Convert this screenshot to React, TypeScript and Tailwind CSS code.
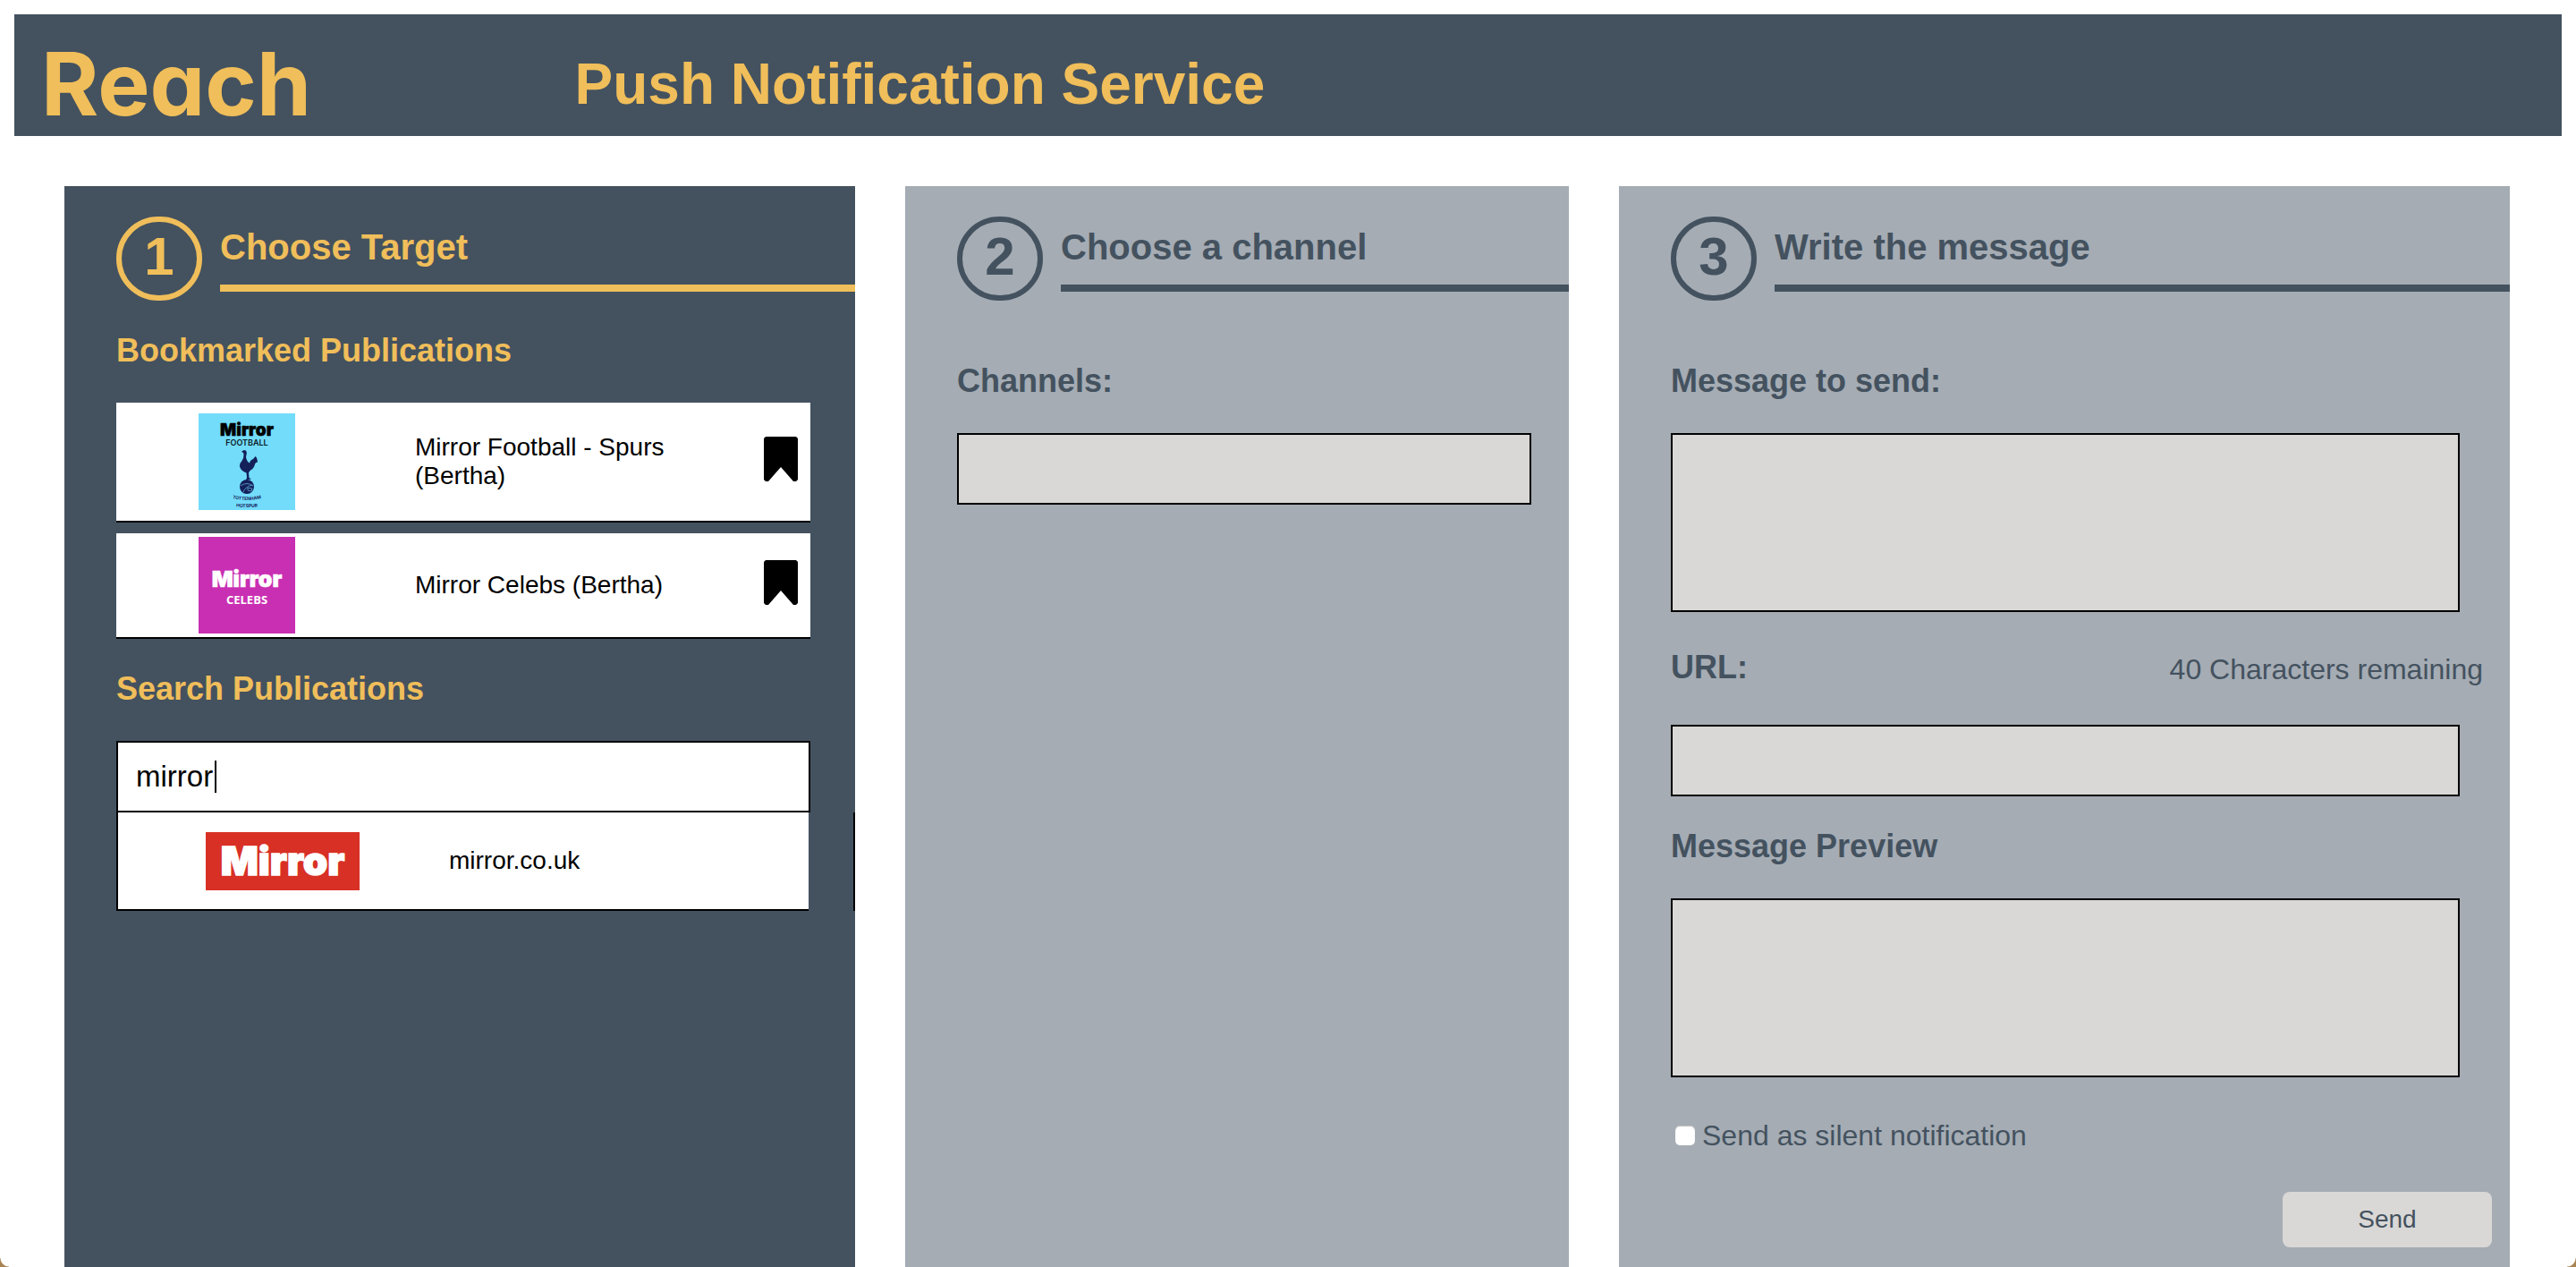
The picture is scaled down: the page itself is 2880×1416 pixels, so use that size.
import { useState } from "react";
import type { ReactNode } from "react";

type Tone = "gold" | "slate";

function ReachLogo() {
  return (
    <span className="font-[Inter,sans-serif] text-[98px] leading-[104px] font-bold [font-feature-settings:'cv11']">
      Reach
    </span>
  );
}

function SpursTile() {
  return (
    <svg viewBox="0 0 108 108" className="size-[108px]" role="img" aria-label="Mirror Football Spurs logo">
      <defs>
        <path id="arc-upper" d="M34 94 Q54 100 74 94" />
        <path id="arc-lower" d="M34 103 Q54 107 74 103" />
      </defs>
      <rect width="108" height="108" fill="#73dcfb" />
      <text x="54" y="25" textAnchor="middle" fontFamily="Inter, sans-serif" fontWeight="900" fontSize="19" fill="#000" stroke="#000" strokeWidth="0.5">
        Mirror
      </text>
      <text x="54" y="36" textAnchor="middle" fontFamily="Inter, sans-serif" fontWeight="600" fontSize="9" fill="#0a1a22">
        FOOTBALL
      </text>
      <path
        d="M48 42.500L51 41q2.800 0 2.800 3.500L53 49q1 5 4 6.500q1-3.500 4.500-5l2-2.500q2 1 2.500 6.500q-2.500 0-3.200 3q-1 4-5.300 6.500l-1.500 2.500l.5 5.500l2.500 1.500l-3.500.5l-1.500 2h-1.500l1.500-4.500l-.5-5q-6-2-7.500-7q-.4-3.500 2.500-6.500q2.500-3 1.800-8.500z"
        fill="#14205a"
      />
      <circle cx="54" cy="82" r="8" fill="#14205a" />
      <path d="M47 81q7-5 14 0M50 88q2-6 10-8M55 83l5 1-1 3-4-1z" fill="none" stroke="#5fa8cf" strokeWidth="0.8" />
      <text fontFamily="Inter, sans-serif" fontWeight="700" fontSize="5" fill="#14205a">
        <textPath href="#arc-upper" startOffset="50%" textAnchor="middle">TOTTENHAM</textPath>
      </text>
      <text fontFamily="Inter, sans-serif" fontWeight="700" fontSize="5" fill="#14205a">
        <textPath href="#arc-lower" startOffset="50%" textAnchor="middle">HOTSPUR</textPath>
      </text>
    </svg>
  );
}

function CelebsTile() {
  return (
    <svg viewBox="0 0 108 108" className="size-[108px]" role="img" aria-label="Mirror Celebs logo">
      <rect width="108" height="108" fill="#c92fb2" />
      <text x="54" y="56" textAnchor="middle" fontFamily="Inter, sans-serif" fontWeight="900" fontSize="25" fill="#fff" stroke="#fff" strokeWidth="0.6">
        Mirror
      </text>
      <text x="54" y="75" textAnchor="middle" fontFamily="Open Sans, sans-serif" fontWeight="700" fontSize="13" fill="#fff">
        CELEBS
      </text>
    </svg>
  );
}

function MirrorTile() {
  return (
    <svg viewBox="0 0 172 65" className="h-[65px] w-[172px]" role="img" aria-label="Mirror logo">
      <rect width="172" height="65" fill="#d83025" />
      <text x="86" y="48" textAnchor="middle" fontFamily="Inter, sans-serif" fontWeight="900" fontSize="44" fill="#fff" stroke="#fff" strokeWidth="1.5">
        Mirror
      </text>
    </svg>
  );
}

function Step({ number, title, tone }: { number: number; title: string; tone: Tone }) {
  const ring = tone === "gold" ? "border-[#f0be5a]" : "border-[#44525f]";
  return (
    <div className="flex gap-5">
      <div className={`flex h-[94px] w-24 shrink-0 items-center justify-center rounded-full border-[6px] pb-1 text-[60px] leading-[68px] font-bold ${ring}`}>
        {number}
      </div>
      <h2 className={`mt-3 h-[72px] grow border-b-8 text-[40px] leading-[44px] font-bold ${ring}`}>{title}</h2>
    </div>
  );
}

function Panel({ tone, children }: { tone: Tone; children: ReactNode }) {
  const look = tone === "gold" ? "bg-[#44525f] text-[#f0be5a]" : "bg-[#a5acb4] text-[#44525f]";
  return <section className={`min-w-0 overflow-hidden pt-[34px] pl-[58px] ${look}`}>{children}</section>;
}

function Bookmark({ name, logo }: { name: string; logo: ReactNode }) {
  return (
    <li className="flex items-center border-b-2 border-black bg-white py-1 text-black">
      <div className="flex w-[292px] shrink-0 justify-center">{logo}</div>
      <p className="my-[30px] ml-[42px] w-[292px] text-[28px] leading-8">{name}</p>
      <button type="button" aria-label={`Remove bookmark ${name}`} className="mr-[14px] mb-[6px] ml-auto">
        <svg viewBox="0 0 38 50" className="h-[50px] w-[38px]" aria-hidden="true">
          <path d="M2 0h34l2 2v46l-2 2h-3L19 34 5 50H2l-2-2V2z" />
        </svg>
      </button>
    </li>
  );
}

const field = "block w-full resize-none border-2 border-black bg-[#d9d8d6] px-5 text-[33px] outline-none";
const label = "block text-[36px] leading-10 font-bold";

export default function App() {
  const [query, setQuery] = useState("mirror");
  return (
    <div className="relative flex min-h-screen flex-col overflow-hidden bg-white p-4 pb-0 font-['Liberation_Sans',Arial,sans-serif]">
      <header className="flex h-[136px] bg-[#44525f] text-[#f0be5a]">
        <div className="w-[22%] shrink-0 pt-[26px] pl-[30px]">
          <ReachLogo />
        </div>
        <h1 className="pt-[42px] text-[64px] leading-[72px] font-bold">Push Notification Service</h1>
      </header>

      <main className="mt-14 mr-[58px] ml-14 grid grow grid-cols-[884fr_742fr_996fr] gap-14">
        <Panel tone="gold">
          <Step number={1} title="Choose Target" tone="gold" />
          <h3 className="mt-9 text-[36px] leading-10 font-bold">Bookmarked Publications</h3>
          <ul className="mt-[38px] mr-[50px] flex flex-col gap-3">
            <Bookmark name="Mirror Football - Spurs (Bertha)" logo={<SpursTile />} />
            <Bookmark name="Mirror Celebs (Bertha)" logo={<CelebsTile />} />
          </ul>
          <label htmlFor="search" className={`mt-9 ${label}`}>
            Search Publications
          </label>
          <div className="relative mt-[38px] mr-[50px]">
            <input
              id="search"
              value={query}
              onChange={(e) => setQuery(e.target.value)}
              className="block h-20 w-full border-2 border-black bg-white px-5 text-[33px] text-black caret-transparent outline-none"
            />
            <span className="absolute top-[22px] left-[110px] h-9 w-0.5 bg-black" aria-hidden="true" />
          </div>
          <ul className="border-x-2 border-black">
            <li className="mr-[50px] flex h-[110px] items-center border-b-2 border-black bg-white text-black">
              <a href="#mirror" className="flex items-center gap-[100px] pl-[98px] text-[28px] leading-8">
                <MirrorTile />
                mirror.co.uk
              </a>
            </li>
          </ul>
        </Panel>

        <Panel tone="slate">
          <Step number={2} title="Choose a channel" tone="slate" />
          <div className="mt-[70px] mr-[42px]">
            <label htmlFor="channels" className={label}>
              Channels:
            </label>
            <input id="channels" className={`mt-[38px] h-20 ${field}`} />
          </div>
        </Panel>

        <Panel tone="slate">
          <Step number={3} title="Write the message" tone="slate" />
          <form className="mt-[70px]" onSubmit={(e) => e.preventDefault()}>
            <div className="mr-14">
              <label htmlFor="message" className={label}>
                Message to send:
              </label>
              <textarea id="message" className={`mt-[38px] h-[200px] ${field}`} />
            </div>
            <div className="mt-[42px] mr-[30px] flex items-end justify-between">
              <label htmlFor="url" className={label}>
                URL:
              </label>
              <span className="text-[32px] leading-9">40 Characters remaining</span>
            </div>
            <div className="mt-11 mr-14">
              <input id="url" className={`h-20 ${field}`} />
              <label htmlFor="preview" className={`mt-9 ${label}`}>
                Message Preview
              </label>
              <textarea id="preview" readOnly className={`mt-[38px] h-[200px] ${field}`} />
            </div>
            <label className="mt-[47px] flex items-center gap-2 pl-[5px] text-[32px] leading-9">
              <input type="checkbox" className="size-[22px] appearance-none rounded-[5px] bg-white shadow-[inset_0_1px_1px_#00000040]" />
              Send as silent notification
            </label>
            <button
              type="submit"
              className="mt-[45px] mr-5 mb-[22px] ml-auto block h-[62px] w-[234px] rounded-lg bg-[#d9d8d6] text-[28px] leading-8"
            >
              Send
            </button>
          </form>
        </Panel>
      </main>

      <div className="absolute bottom-0 left-0 size-2.5 bg-[radial-gradient(circle_at_top_right,transparent_9px,#a98352_10px)]" />
      <div className="absolute right-0 bottom-0 size-2.5 bg-[radial-gradient(circle_at_top_left,transparent_9px,#a98352_10px)]" />
    </div>
  );
}
